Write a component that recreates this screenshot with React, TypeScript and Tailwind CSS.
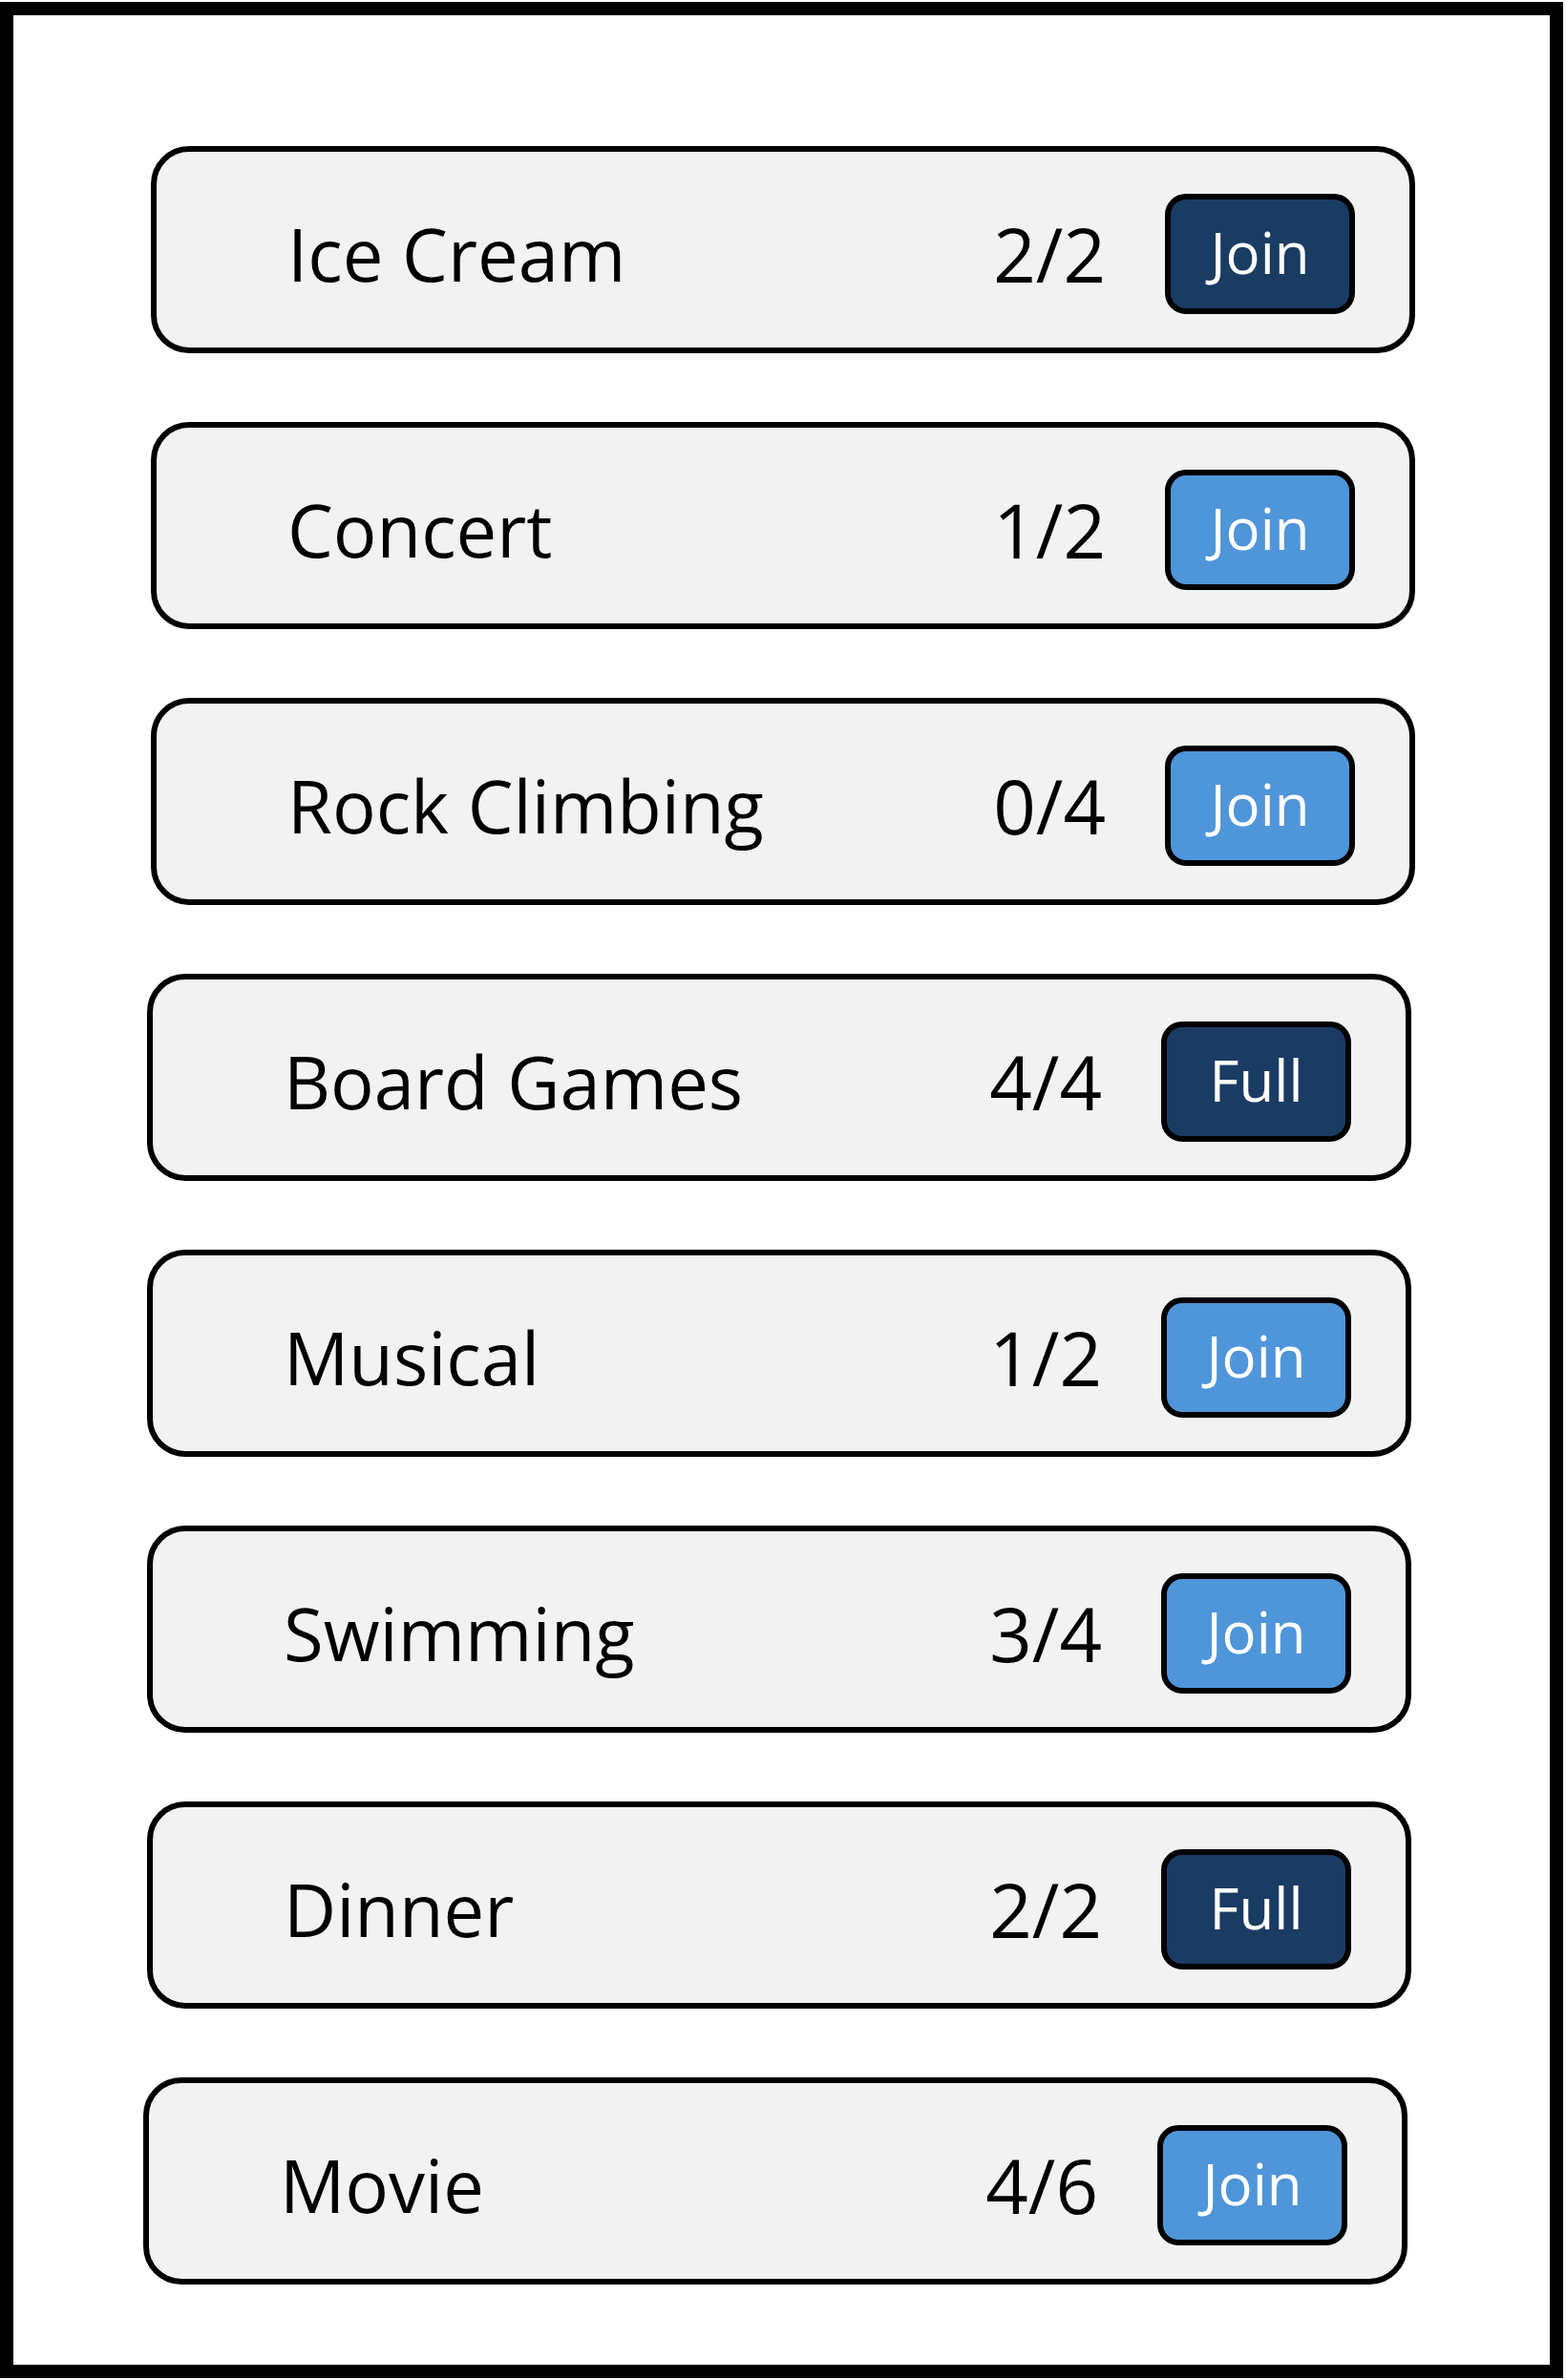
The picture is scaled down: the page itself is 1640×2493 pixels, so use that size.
const activities = [
  { name: "Ice Cream", count: "2/2", label: "Join", dark: true, shift: "ml-[144px]" },
  { name: "Concert", count: "1/2", label: "Join", dark: false, shift: "ml-[144px]" },
  { name: "Rock Climbing", count: "0/4", label: "Join", dark: false, shift: "ml-[144px]" },
  { name: "Board Games", count: "4/4", label: "Full", dark: true, shift: "ml-[140px]" },
  { name: "Musical", count: "1/2", label: "Join", dark: false, shift: "ml-[140px]" },
  { name: "Swimming", count: "3/4", label: "Join", dark: false, shift: "ml-[140px]" },
  { name: "Dinner", count: "2/2", label: "Full", dark: true, shift: "ml-[140px]" },
  { name: "Movie", count: "4/6", label: "Join", dark: false, shift: "ml-[136px]" },
]

const ActivityRow = ({ name, count, label, dark, shift }: (typeof activities)[number]) => {
  return (
    <div
      className={`${shift} w-[1324px] h-[217px] flex items-center pl-[137px] pr-[57px] pt-[8px]
        bg-[#f2f2f2] border-[6px] border-black rounded-[40px]`}
    >
      <span className="flex-1 text-[76px] leading-none text-black">{name}</span>
      <span className="text-[78px] leading-none text-black">{count}</span>
      <button
        type="button"
        className={`ml-[62px] w-[199px] h-[126px] flex items-center justify-center border-[6px] border-black rounded-[22px] text-white text-[60px] leading-none ${
          dark ? "bg-[#1a3c63]" : "bg-[#4f95d9]"
        }`}
      >
        <span className="-mt-[4px]">{label}</span>
      </button>
    </div>
  )
}

const App = () => {
  return (
    <div
      className="w-[1640px] h-[2493px] bg-white pt-[2px]"
      style={{ fontFamily: '"Open Sans", "Noto Sans", sans-serif' }}
    >
      <div className="w-[1637px] h-[2489px] border-[14px] border-black flex flex-col gap-[72px] pt-[137px]">
        {activities.map((a) => (
          <ActivityRow key={a.name} {...a} />
        ))}
      </div>
    </div>
  )
}

export default App
